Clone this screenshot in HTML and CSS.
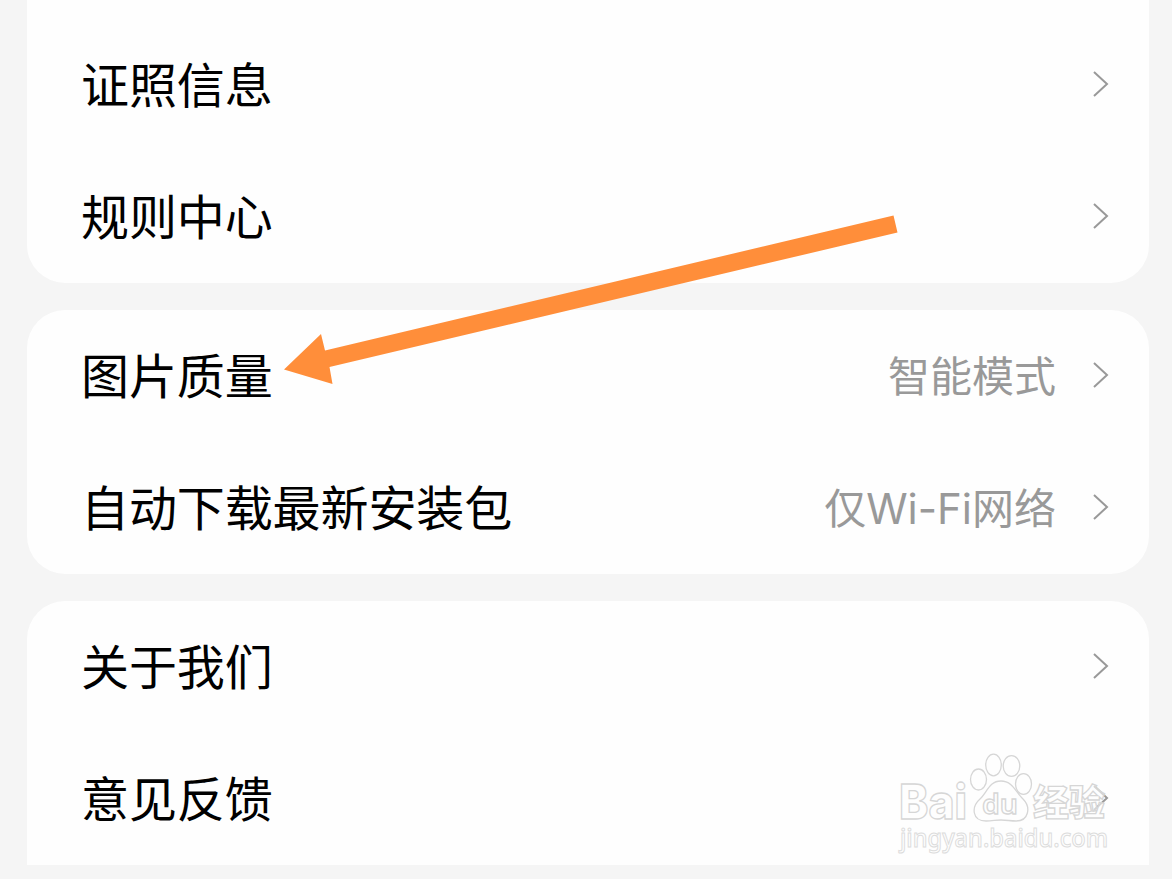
FILE: index.html
```
<!DOCTYPE html>
<html lang="zh-CN">
<head>
  <meta charset="UTF-8">
  <title>设置</title>
  <link rel="stylesheet" href="styles.css">
</head>
<body>
  <main class="settings">
    <section class="card card-first">
      <div class="row">
        <span class="label">证照信息</span>
        <svg class="chevron" viewBox="0 0 18 28"><path d="M2 2l13 12L2 26"/></svg>
      </div>
      <div class="row">
        <span class="label">规则中心</span>
        <svg class="chevron" viewBox="0 0 18 28"><path d="M2 2l13 12L2 26"/></svg>
      </div>
    </section>

    <section class="card">
      <div class="row">
        <span class="label">图片质量</span>
        <span class="value">智能模式</span>
        <svg class="chevron" viewBox="0 0 18 28"><path d="M2 2l13 12L2 26"/></svg>
      </div>
      <div class="row">
        <span class="label">自动下载最新安装包</span>
        <span class="value">仅<span class="latin">Wi-Fi</span>网络</span>
        <svg class="chevron" viewBox="0 0 18 28"><path d="M2 2l13 12L2 26"/></svg>
      </div>
    </section>

    <section class="card card-last">
      <div class="row">
        <span class="label">关于我们</span>
        <svg class="chevron" viewBox="0 0 18 28"><path d="M2 2l13 12L2 26"/></svg>
      </div>
      <div class="row">
        <span class="label">意见反馈</span>
        <svg class="chevron" viewBox="0 0 18 28"><path d="M2 2l13 12L2 26"/></svg>
      </div>
    </section>
  </main>

  <svg class="arrow" viewBox="0 0 616 172">
    <path d="M1 157.500L38 122l4 16.500L610.500 3.500l4 17L46.500 155l3 17z"/>
  </svg>

  <svg class="watermark" viewBox="0 0 220 120">
    <text class="wm-bai" x="3" y="69" textLength="68" lengthAdjust="spacingAndGlyphs">Bai</text>
    <g class="wm-paw">
      <ellipse cx="82.500" cy="29.500" rx="8" ry="10.500"/>
      <ellipse cx="97.500" cy="15" rx="7.800" ry="10.800"/>
      <ellipse cx="115.500" cy="16" rx="8.300" ry="10.300"/>
      <ellipse cx="127.500" cy="34" rx="8" ry="10.300"/>
      <path d="M105 31c-12 0-14 12-21 18-9 8-8 22 6 22 6 0 10-1 15-1s10 1 15 1c13 0 15-14 7-22-7-6-10-18-22-18z"/>
    </g>
    <text class="wm-du" x="86" y="64" textLength="36" lengthAdjust="spacingAndGlyphs">du</text>
    <text class="wm-exp" x="137" y="66" textLength="72" lengthAdjust="spacingAndGlyphs">经验</text>
    <text class="wm-url" x="4" y="97" textLength="208" lengthAdjust="spacingAndGlyphs">jingyan.baidu.com</text>
  </svg>
</body>
</html>
```
FILE: styles.css
```
* {
  box-sizing: border-box;
}

body {
  position: relative;
  margin: 0;
  height: 879px;
  overflow: hidden;
  background: #f5f5f5;
  color: #000;
  font-family: "Noto Sans CJK SC", sans-serif;
}

.settings {
  display: flex;
  flex-direction: column;
  gap: 27px;
  padding: 0 23px 0 27px;
}

.card {
  padding: 0 39px 0 54px;
  background: #fefefe;
  border-radius: 38px;
}

.card-first {
  padding-top: 19px;
  border-radius: 0 0 38px 38px;
}

.card-last {
  border-radius: 38px 38px 0 0;
}

.row {
  display: flex;
  align-items: center;
  height: 132px;
  padding-bottom: 2px;
}

.label {
  flex: 1;
  padding-bottom: 4px;
  font-size: 48px;
  line-height: 72px;
  letter-spacing: -0.1px;
}

.value {
  margin-right: 36px;
  padding-bottom: 3px;
  font-size: 42px;
  line-height: 60px;
  color: #999;
}

.latin {
  font-family: Inter, "Noto Sans CJK SC", sans-serif;
  line-height: 1;
}

.chevron {
  width: 18px;
  height: 28px;
  fill: none;
  stroke: #999;
  stroke-width: 2;
}

.arrow {
  position: absolute;
  left: 283px;
  top: 212px;
  width: 616px;
  height: 172px;
  fill: #ff8e3a;
}

/* outlined logo over the bottom right corner */
.watermark {
  position: absolute;
  left: 896px;
  top: 750px;
  width: 220px;
  height: 120px;
  fill: #fefefe;
  stroke: #d6d6d6;
  stroke-width: 1.3;
}

.wm-bai {
  font: 800 48px Inter, sans-serif;
}

.wm-du {
  font: 600 27px "Noto Sans", sans-serif;
}

.wm-exp {
  font: 900 36px "Noto Sans CJK SC", sans-serif;
  fill-opacity: 0.6;
}

.wm-url {
  font: 500 25px "Noto Sans", sans-serif;
  stroke: #dcdcdc;
  stroke-width: 1;
}
```
